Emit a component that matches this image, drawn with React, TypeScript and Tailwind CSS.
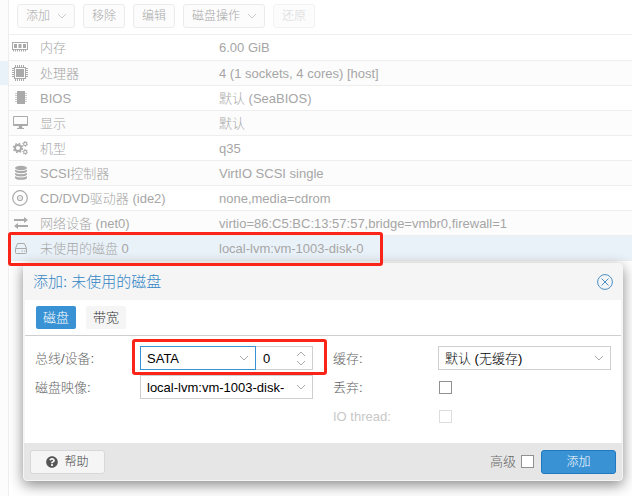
import type { ReactNode } from "react";
import { FaQuestionCircle } from "react-icons/fa";

const Chevron = ({ up, className = "" }: { up?: boolean; className?: string }) => (
  <svg viewBox="0 0 10 6" fill="none" stroke="currentColor" className={`h-[6px] w-[10px] ${className}`}>
    <path d={up ? "M1 5l4-4 4 4" : "M1 1l4 4 4-4"} />
  </svg>
);

const Icon = ({ children }: { children: ReactNode }) => (
  <svg viewBox="0 0 16 16" fill="currentColor" className="block h-4 w-4" aria-hidden="true">
    {children}
  </svg>
);

const icons = {
  memory: (
    <Icon>
      <path fillRule="evenodd" d="M0 3h16v8H0zM1 4v6h14V4z" />
      <path d="M2 5h3v4H2zM6.500 5h3v4h-3zM11 5h3v4h-3zM1 11h1v1.500H1zM3 11h1v1.500H3zM5 11h1v1.500H5zM7 11h1v1.500H7zM9 11h1v1.500H9zM11 11h1v1.500h-1zM13 11h1v1.500h-1z" />
    </Icon>
  ),
  cpu: (
    <Icon>
      <path fillRule="evenodd" d="M2 2h12v12H2zM3 3v10h10V3z" />
      <path d="M4 4h8v8H4z" />
      <path d="M3 0h1v2H3zM5 0h1v2H5zM7 0h1v2H7zM9 0h1v2H9zM11 0h1v2h-1zM3 14h1v2H3zM5 14h1v2H5zM7 14h1v2H7zM9 14h1v2H9zM11 14h1v2h-1zM0 3h2v1H0zM0 5h2v1H0zM0 7h2v1H0zM0 9h2v1H0zM0 11h2v1H0zM14 3h2v1h-2zM14 5h2v1h-2zM14 7h2v1h-2zM14 9h2v1h-2zM14 11h2v1h-2z" />
    </Icon>
  ),
  chip: (
    <Icon>
      <path d="M5 1h8v13H5z" />
      <path opacity=".6" d="M3 3h2v1H3zM3 5h2v1H3zM3 7h2v1H3zM3 9h2v1H3zM3 11h2v1H3zM13 3h2v1h-2zM13 5h2v1h-2zM13 7h2v1h-2zM13 9h2v1h-2zM13 11h2v1h-2z" />
    </Icon>
  ),
  display: (
    <Icon>
      <path fillRule="evenodd" d="M2 1h13a1 1 0 0 1 1 1v8a1 1 0 0 1-1 1h-5l.5 2H12v1H5v-1h1.500l.5-2H2a1 1 0 0 1-1-1V2a1 1 0 0 1 1-1zM2 2v7h13V2z" />
    </Icon>
  ),
  machine: (
    <Icon>
      <g fill="none" stroke="currentColor">
        <circle cx="6" cy="8" r="3" strokeWidth="2" />
        <circle cx="6" cy="8" r="4.500" strokeWidth="1.500" strokeDasharray="1.770 1.770" />
        <circle cx="13.200" cy="4" r="1.600" strokeWidth="1.100" />
        <circle cx="13.200" cy="4" r="2.500" strokeWidth=".8" strokeDasharray="1.300 1.300" />
        <circle cx="13.200" cy="12" r="1.600" strokeWidth="1.100" />
        <circle cx="13.200" cy="12" r="2.500" strokeWidth=".8" strokeDasharray="1.300 1.300" />
      </g>
    </Icon>
  ),
  scsi: (
    <Icon>
      <ellipse cx="9" cy="3" rx="6" ry="2.200" />
      <path d="M3 4.700q6 2.600 12 0v1.600q-1 1.900-6 1.900T3 6.300zM3 8q6 2.600 12 0v1.600q-1 1.900-6 1.900T3 9.600zM3 11.300q6 2.600 12 0v1.600q-1 1.900-6 1.900T3 12.900z" />
    </Icon>
  ),
  disc: (
    <Icon>
      <g fill="none" stroke="currentColor">
        <circle cx="8" cy="8" r="7.300" strokeWidth="1.200" />
        <circle cx="8" cy="8" r="2.500" strokeWidth="1.200" />
        <circle cx="8" cy="8" r=".4" strokeWidth=".6" />
      </g>
    </Icon>
  ),
  network: (
    <Icon>
      <path d="M2 4h10V2l4 3-4 3V6H2zM16 10H6V8l-4 3 4 3v-2h10z" />
    </Icon>
  ),
  disk: (
    <Icon>
      <path fill="none" stroke="currentColor" d="M3.500 8.500l2-5h7l2 5v4q0 1-1 1h-9q-1 0-1-1zM3.500 8.500h11" />
      <path d="M9.500 10.500h1.500v1H9.500zM12 10.500h1.500v1H12z" />
    </Icon>
  ),
};

const hardware = [
  { icon: icons.memory, name: "内存", value: "6.00 GiB" },
  { icon: icons.cpu, name: "处理器", value: "4 (1 sockets, 4 cores) [host]" },
  { icon: icons.chip, name: "BIOS", value: "默认 (SeaBIOS)" },
  { icon: icons.display, name: "显示", value: "默认" },
  { icon: icons.machine, name: "机型", value: "q35" },
  { icon: icons.scsi, name: "SCSI控制器", value: "VirtIO SCSI single" },
  { icon: icons.disc, name: "CD/DVD驱动器 (ide2)", value: "none,media=cdrom" },
  { icon: icons.network, name: "网络设备 (net0)", value: "virtio=86:C5:BC:13:57:57,bridge=vmbr0,firewall=1" },
  { icon: icons.disk, name: "未使用的磁盘 0", value: "local-lvm:vm-1003-disk-0", selected: true },
];

const toolbar = [
  { label: "添加", menu: true },
  { label: "移除" },
  { label: "编辑" },
  { label: "磁盘操作", menu: true },
  { label: "还原", disabled: true },
];

const Toolbar = () => (
  <div className="flex h-[35px] items-start gap-2 border-b border-[#eeeeee] pt-1 pl-2">
    {toolbar.map((b) => (
      <button
        key={b.label}
        disabled={b.disabled}
        className="flex h-6 items-center gap-[7px] rounded-[3px] border border-[#ebebeb] bg-[#fcfcfc] px-2 text-xs text-[#a8a8a8] disabled:border-[#f3f3f3] disabled:text-[#d8d8d8]"
      >
        {b.label}
        {b.menu && <Chevron className="-mr-px text-[#cccccc]" />}
      </button>
    ))}
  </div>
);

const HardwareTable = () => (
  <table className="w-full table-fixed border-collapse">
    <tbody>
      {hardware.map((row) => (
        <tr
          key={row.name}
          className={`h-[25px] border-b border-[#eeeeee] ${row.selected ? "bg-[#eaf2f9]" : "even:bg-[#fcfcfc]"}`}
        >
          <td className="w-[31px] p-0 pl-[3px] text-[#aaaaaa]">{row.icon}</td>
          <td className="w-[179px] p-0 pt-px leading-[23px] whitespace-nowrap">{row.name}</td>
          <td className="p-0 pt-px leading-[23px] whitespace-nowrap">{row.value}</td>
        </tr>
      ))}
    </tbody>
  </table>
);

const Select = ({ id, value, active }: { id: string; value: string; active?: boolean }) => (
  <div className="relative min-w-0 flex-1">
    <select
      id={id}
      className={`block h-6 w-full appearance-none border bg-white pt-px pr-7 pl-[6px] text-black ${active ? "border-[#3892d4]" : "border-[#cfcfcf]"}`}
    >
      <option>{value}</option>
    </select>
    <Chevron className="pointer-events-none absolute top-[9px] right-[7px] text-[#aaaaaa]" />
  </div>
);

const checkbox = "block h-[13px] w-[13px] shrink-0 appearance-none border border-[#919191] bg-white disabled:border-[#dddddd]";

const AddDiskDialog = () => (
  <div
    role="dialog"
    aria-labelledby="dialog-title"
    className="absolute top-[263px] right-[9px] left-[23px] rounded-[4px] border border-[#f5f5f5] bg-[#f5f5f5] text-[#666666] shadow-[0_4px_14px_#888888]"
  >
    <header className="flex h-9 items-center justify-between px-[9px]">
      <h1 id="dialog-title" className="text-[15px] text-[#3486c5]">添加: 未使用的磁盘</h1>
      <button aria-label="关闭" className="text-[#4a90c8]">
        <svg viewBox="0 0 16 16" fill="none" stroke="currentColor" className="h-4 w-4">
          <circle cx="8" cy="8" r="7.400" />
          <path d="M4.500 4.500l7 7M11.500 4.500l-7 7" />
        </svg>
      </button>
    </header>

    <div className="mx-px bg-white">
      <nav role="tablist" className="flex h-9 items-start gap-[10px] border-b border-[#cfcfcf] px-[11px] pt-[6px]">
        <button role="tab" aria-selected="true" className="h-[23px] w-10 rounded-[2px] bg-[#3892d4] text-white">磁盘</button>
        <button role="tab" aria-selected="false" className="h-[23px] w-10 rounded-[2px] bg-[#f5f5f5] text-[#333333]">带宽</button>
      </nav>

      <form className="grid h-[107px] grid-cols-2 content-start gap-x-5 px-[10px] pt-[10px]">
        <div className="flex flex-col gap-[5px]">
          <div className="flex h-6 items-center">
            <label htmlFor="bus" className="w-[105px] shrink-0 pt-px">总线/设备:</label>
            <Select id="bus" value="SATA" active />
            <div className="relative w-[57px] shrink-0">
              <input
                aria-label="设备编号"
                defaultValue="0"
                className="block h-6 w-full border border-l-0 border-[#cfcfcf] bg-white pl-[7px] text-black"
              />
              <div className="absolute top-[5px] right-[7px] flex flex-col gap-[3px] text-[#aaaaaa]">
                <Chevron up />
                <Chevron />
              </div>
            </div>
          </div>
          <div className="flex h-6 items-center">
            <label htmlFor="image" className="w-[105px] shrink-0 pt-px">磁盘映像:</label>
            <Select id="image" value="local-lvm:vm-1003-disk-0" />
          </div>
        </div>

        <div className="flex flex-col gap-[5px]">
          <div className="flex h-6 items-center">
            <label htmlFor="cache" className="w-[105px] shrink-0 pt-px">缓存:</label>
            <Select id="cache" value="默认 (无缓存)" />
          </div>
          <div className="flex h-6 items-center">
            <label htmlFor="discard" className="w-[106px] shrink-0 pt-px">丢弃:</label>
            <input id="discard" type="checkbox" className={checkbox} />
          </div>
          <div className="flex h-6 items-center text-[#c8c8c8]">
            <label htmlFor="iothread" className="w-[106px] shrink-0 pt-px">IO thread:</label>
            <input id="iothread" type="checkbox" disabled className={checkbox} />
          </div>
        </div>
      </form>
    </div>

    <footer className="flex h-[37px] items-center justify-between rounded-b-[3px] bg-[#e6e6e6] px-[6px]">
      <button className="flex h-6 w-[75px] items-center justify-center gap-[6px] rounded-[3px] border border-[#d8d8d8] bg-[#f5f5f5] text-xs text-[#444444]">
        <FaQuestionCircle className="h-3 w-3 text-[#555555]" />
        帮助
      </button>
      <div className="flex items-center">
        <label htmlFor="advanced" className="mr-[5px] pt-px">高级</label>
        <input id="advanced" type="checkbox" className={checkbox} />
        <button className="ml-[7px] h-6 w-[75px] rounded-[3px] border border-[#2079c0] bg-[#3892d4] text-xs text-white">添加</button>
      </div>
    </footer>
  </div>
);

export default function App() {
  return (
    <div className="relative flex min-h-screen bg-white font-['Liberation_Sans','Noto_Sans_CJK_SC',sans-serif] text-[13px] font-light text-[#a6a6a6]">
      <aside className="w-2 shrink-0 bg-[#fcfcfc] pt-[61px]">
        <div className="h-6 bg-[#eaf2f9]" />
      </aside>
      <main className="min-w-0 flex-1 border-l border-[#eeeeee]">
        <Toolbar />
        <HardwareTable />
      </main>

      <AddDiskDialog />

      {/* highlight frames */}
      <div className="pointer-events-none absolute top-[232px] left-2 h-[34px] w-[375px] rounded-[3px] border-3 border-[#fb2418]" />
      <div className="pointer-events-none absolute top-[339px] left-[132px] h-9 w-[195px] rounded-[3px] border-3 border-[#fb2418]" />
    </div>
  );
}
